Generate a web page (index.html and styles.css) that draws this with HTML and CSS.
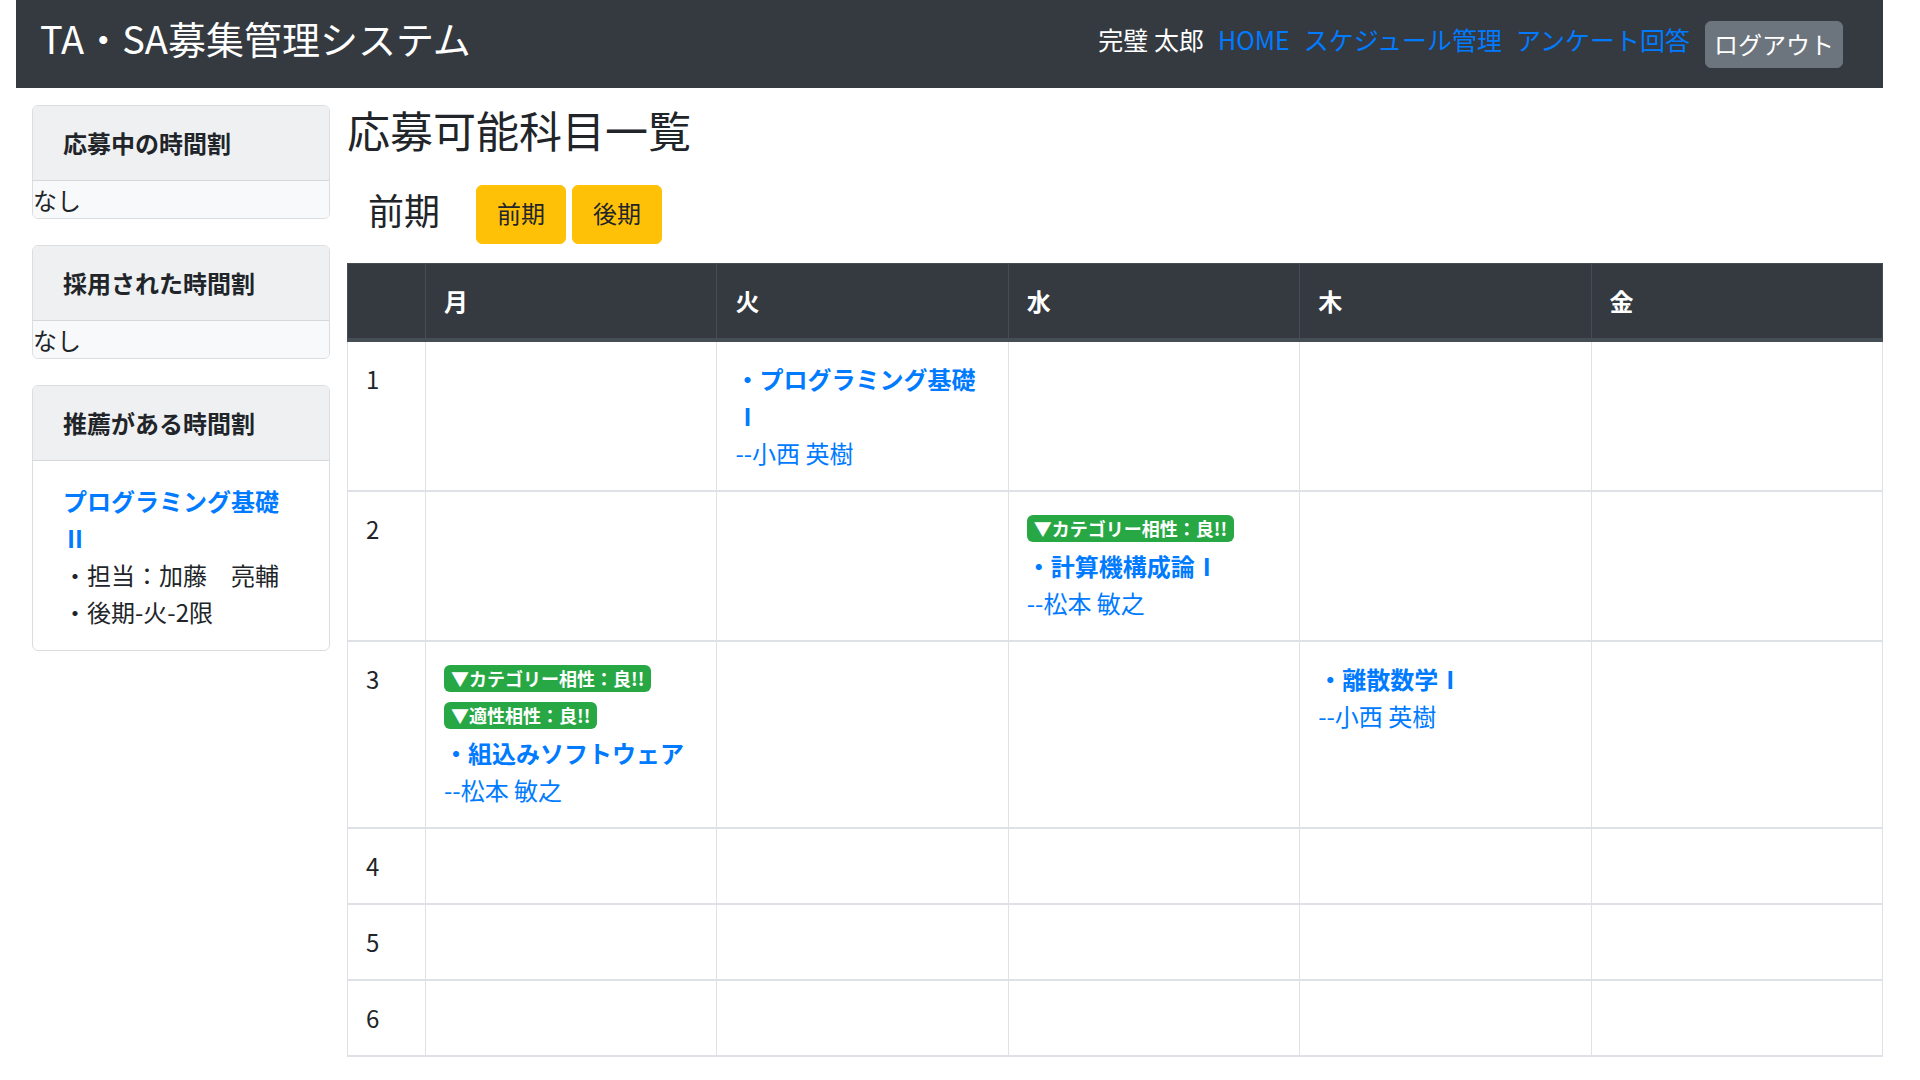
FILE: index.html
```html
<!DOCTYPE html>
<html lang="ja">
<head>
<meta charset="utf-8">
<title>TA・SA募集管理システム</title>
<link rel="stylesheet" href="styles.css">
</head>
<body>
<nav class="navbar">
  <a class="brand" href="#">TA・SA募集管理システム</a>
  <div class="nav-right">
    <span class="user">完璧 太郎</span>
    <a class="nav-link" href="#">HOME</a>
    <a class="nav-link" href="#">スケジュール管理</a>
    <a class="nav-link" href="#">アンケート回答</a>
    <button class="btn-logout" type="button">ログアウト</button>
  </div>
</nav>

<div class="layout">
  <aside class="sidebar">
    <div class="card">
      <div class="card-header">応募中の時間割</div>
      <div class="card-body-plain">なし</div>
    </div>
    <div class="card">
      <div class="card-header">採用された時間割</div>
      <div class="card-body-plain">なし</div>
    </div>
    <div class="card">
      <div class="card-header">推薦がある時間割</div>
      <div class="card-body">
        <a class="rec-link" href="#">プログラミング基礎Ⅱ</a>
        <div>・担当：加藤　亮輔</div>
        <div>・後期-火-2限</div>
      </div>
    </div>
  </aside>

  <main class="main">
    <h3 class="page-title">応募可能科目一覧</h3>
    <div class="term-row">
      <h4 class="term-label">前期</h4>
      <button class="btn-term" type="button">前期</button>
      <button class="btn-term" type="button">後期</button>
    </div>

    <table class="timetable">
      <thead>
        <tr>
          <th class="col-num"></th>
          <th>月</th>
          <th>火</th>
          <th>水</th>
          <th>木</th>
          <th>金</th>
        </tr>
      </thead>
      <tbody>
        <tr>
          <td>1</td>
          <td></td>
          <td><a class="course" href="#">・プログラミング基礎Ⅰ</a><br><a class="teacher" href="#">--小西 英樹</a></td>
          <td></td>
          <td></td>
          <td></td>
        </tr>
        <tr>
          <td>2</td>
          <td></td>
          <td></td>
          <td>
            <div class="badge-line"><span class="badge">▼カテゴリー相性：良!!</span></div>
            <a class="course" href="#">・計算機構成論Ⅰ</a><br><a class="teacher" href="#">--松本 敏之</a>
          </td>
          <td></td>
          <td></td>
        </tr>
        <tr>
          <td>3</td>
          <td>
            <div class="badge-line"><span class="badge">▼カテゴリー相性：良!!</span></div>
            <div class="badge-line"><span class="badge">▼適性相性：良!!</span></div>
            <a class="course" href="#">・組込みソフトウェア</a><br><a class="teacher" href="#">--松本 敏之</a>
          </td>
          <td></td>
          <td></td>
          <td><a class="course" href="#">・離散数学Ⅰ</a><br><a class="teacher" href="#">--小西 英樹</a></td>
          <td></td>
        </tr>
        <tr>
          <td>4</td>
          <td></td><td></td><td></td><td></td><td></td>
        </tr>
        <tr>
          <td>5</td>
          <td></td><td></td><td></td><td></td><td></td>
        </tr>
        <tr>
          <td>6</td>
          <td></td><td></td><td></td><td></td><td></td>
        </tr>
      </tbody>
    </table>
  </main>
</div>
</body>
</html>
```

FILE: styles.css
```css
html, body {
  margin: 0;
  padding: 0;
}

body {
  font-family: "Noto Sans CJK JP", "Noto Sans", sans-serif;
  font-size: 24px;
  line-height: 36px;
  color: #212529;
  background: #fff;
  padding-bottom: 216px;
}

a {
  text-decoration: none;
  color: #007bff;
}

/* ---------- navbar ---------- */
.navbar {
  margin: 0 37px 0 16px;
  height: 88px;
  background: #343a40;
  display: flex;
  align-items: flex-start;
  padding: 0 40px 0 24px;
  box-sizing: border-box;
}

.brand {
  color: #fff;
  font-size: 38px;
  line-height: 48px;
  margin-right: auto;
  margin-top: 14px;
}

.nav-right {
  display: flex;
  align-items: flex-start;
  gap: 14px;
  margin-top: 21px;
  font-size: 25px;
}

.user {
  color: #fff;
}

.nav-link {
  color: #007bff;
}

.btn-logout {
  font-family: inherit;
  font-size: 24px;
  line-height: 36px;
  color: #fff;
  background: #6c757d;
  border: 1px solid #6c757d;
  border-radius: 6px;
  padding: 3px 8px 5px;
  height: 47px;
  margin-top: 0;
  margin-left: 1px;
}

/* ---------- layout ---------- */
.layout {
  display: flex;
  margin: 17px 37px 0 16px;
}

.sidebar {
  width: 331px;
  flex: none;
  padding: 0 17px 0 16px;
  box-sizing: border-box;
}

.main {
  flex: 1;
  min-width: 0;
}

/* ---------- cards ---------- */
.card {
  border: 1px solid #dcdddf;
  border-radius: 6px;
  margin-bottom: 26px;
  overflow: hidden;
  background: #fff;
}

.card-header {
  background: #eff0f2;
  border-bottom: 1px solid #d6d8da;
  padding: 19px 30px;
  font-weight: 700;
}

.card-body-plain {
  background: #f8f9fa;
  line-height: 37px;
}

.card-body {
  padding: 21px 30px 20px;
  line-height: 37px;
}

.rec-link {
  display: block;
  font-weight: 700;
}

/* ---------- main header ---------- */
.page-title {
  margin: -2px 0 0;
  font-size: 43px;
  line-height: 52px;
  font-weight: 400;
}

.term-row {
  display: flex;
  align-items: center;
  margin-top: 30px;
  margin-bottom: 19px;
}

.term-label {
  margin: 0 36px 12px 21px;
  font-size: 36px;
  line-height: 44px;
  font-weight: 400;
}

.btn-term {
  font-family: inherit;
  font-size: 24px;
  line-height: 36px;
  color: #212529;
  background: #ffc107;
  border: 1px solid #ffc107;
  border-radius: 6px;
  padding: 9px 20px 12px;
  height: 59px;
  margin-right: 6px;
}

/* ---------- table ---------- */
.timetable {
  width: 100%;
  border-collapse: collapse;
  table-layout: fixed;
}

.timetable th {
  background: #343a40;
  color: #fff;
  font-weight: 700;
  text-align: left;
  padding: 19px 18px;
  line-height: 36px;
  border: 1px solid #454d55;
  border-bottom: 4px solid #454d55;
}

.timetable th.col-num {
  width: 78px;
  box-sizing: border-box;
}

.timetable td {
  vertical-align: top;
  padding: 18px 18px 19px;
  line-height: 37px;
  border-left: 1px solid #dee2e6;
  border-right: 1px solid #dee2e6;
  border-top: 2px solid #dee2e6;
  border-bottom: 2px solid #dee2e6;
}

.course {
  font-weight: 700;
}

.teacher {
  font-weight: 400;
}

.badge-line {
  height: 37px;
  display: flex;
  align-items: center;
}

.badge {
  display: inline-block;
  font-size: 18px;
  line-height: 18px;
  font-weight: 700;
  color: #fff;
  background: #28a745;
  padding: 4px 7px 5px;
  border-radius: 6px;
}
```
